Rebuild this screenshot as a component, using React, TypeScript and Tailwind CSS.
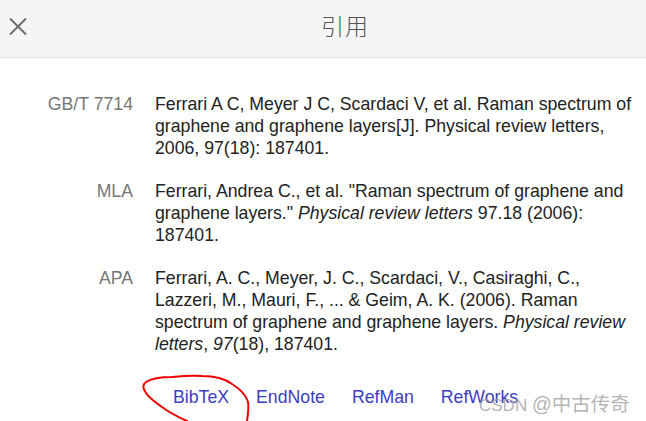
import React from "react";

const rows: { label: string; content: React.ReactNode }[] = [
  {
    label: "GB/T 7714",
    content: (
      <>Ferrari A C, Meyer J C, Scardaci V, et al. Raman spectrum of graphene and graphene layers[J]. Physical review letters, 2006, 97(18): 187401.</>
    ),
  },
  {
    label: "MLA",
    content: (
      <>
        Ferrari, Andrea C., et al. "Raman spectrum of graphene and graphene layers." <i>Physical review letters</i> 97.18 (2006): 187401.
      </>
    ),
  },
  {
    label: "APA",
    content: (
      <>
        Ferrari, A. C., Meyer, J. C., Scardaci, V., Casiraghi, C., Lazzeri, M., Mauri, F., ... &amp; Geim, A. K. (2006). Raman spectrum of graphene and graphene layers. <i>Physical review letters</i>, <i>97</i>(18), 187401.
      </>
    ),
  },
];

export default function App() {
  return (
    <div
      className="relative w-[646px] h-[421px] overflow-hidden bg-white"
      style={{ fontFamily: '"Liberation Sans", Arial, "Noto Sans CJK SC", sans-serif' }}
    >
      <div className="relative h-[58px] bg-[#f5f5f5] border-b border-[#e3e3e3] flex items-center justify-center">
        <svg className="absolute left-[8px] top-[17px]" width="20" height="19" viewBox="0 0 20 19">
          <path d="M2 1.5 L18 17.5 M18 1.5 L2 17.5" stroke="#6b6b6b" strokeWidth="1.8" fill="none" />
        </svg>
        <span
          className="text-[23px] text-[#555] tracking-[1px] ml-[44px] -mt-[6px]"
          style={{ fontFamily: '"Noto Sans CJK SC", sans-serif', fontWeight: 300 }}
        >
          引用
        </span>
      </div>
      <div className="pt-[35px] flex flex-col gap-[21px]">
        {rows.map((r) => (
          <div key={r.label} className="flex leading-[22px] text-[17.7px]">
            <div className="w-[133px] shrink-0 text-right text-[#777]">{r.label}</div>
            <div className="ml-[22px] w-[486px] text-[#222]">{r.content}</div>
          </div>
        ))}
      </div>
      <div className="mt-[31px] ml-[173px] flex gap-[27px] text-[17.7px] leading-[22px] text-[#3d3dc2]">
        <span>BibTeX</span>
        <span>EndNote</span>
        <span>RefMan</span>
        <span>RefWorks</span>
      </div>
      <div
        className="absolute left-[479px] top-[392px] leading-[24px] text-[#a0a0a0]/80 whitespace-nowrap"
        style={{ fontFamily: '"Liberation Sans", "Noto Sans CJK SC", sans-serif' }}
      >
        <span className="text-[17px]">CSDN </span>
        <span className="text-[19.5px]">@中古传奇</span>
      </div>
      <svg className="absolute left-0 top-0 pointer-events-none" width="646" height="421" viewBox="0 0 646 421">
        <path
          d="M187 421 C178 417 170 413 162 407 C155 402 149 398 146 393 C143 389 142 385 146 382 C152 378 162 377 172 377 C182 376 192 375 202 376 C214 376 224 378 232 384 C240 389 246 395 248 402 C249 409 248 415 247 421"
          stroke="#f00000"
          strokeWidth="2"
          fill="none"
          strokeLinecap="round"
          strokeLinejoin="round"
        />
      </svg>
    </div>
  );
}
